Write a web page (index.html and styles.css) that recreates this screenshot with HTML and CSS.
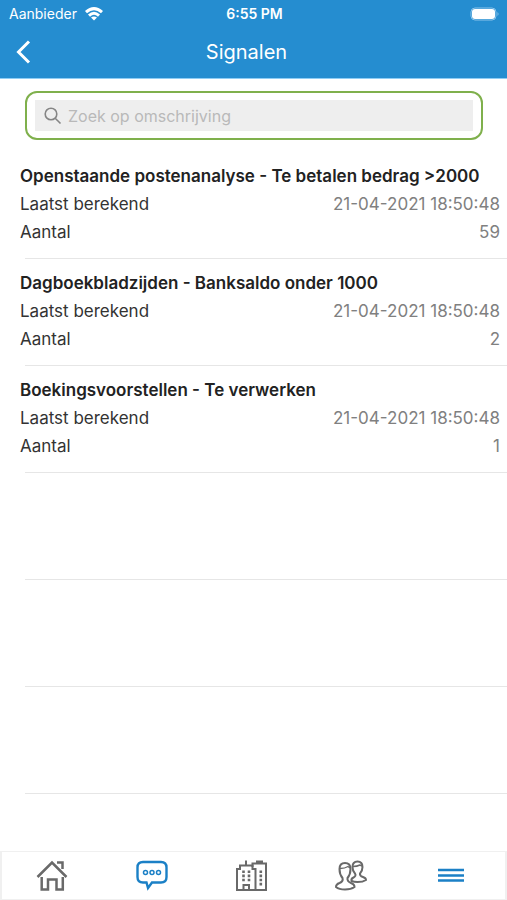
FILE: index.html
```html
<!DOCTYPE html>
<html lang="nl">
<head>
  <meta charset="UTF-8" />
  <meta name="viewport" content="width=device-width, initial-scale=1.0"/>
  <title>Signalen</title>
  <link rel="stylesheet" href="styles.css">
</head>
<body>
  <header>
    <div class="status">
      <span class="carrier">Aanbieder
        <svg width="20" height="16" viewBox="0 0 20 16" fill="none" stroke="#fff" stroke-width="3">
          <path d="M2 6.2Q10-1 18 6.2"/>
          <path d="M5 9.6Q10 5 15 9.6"/>
          <path d="M10 14.6L7 11.6Q10 9.4 13 11.6Z" fill="#fff" stroke="none"/>
        </svg>
      </span>
      <span class="clock">6:55 PM</span>
      <svg class="battery" width="30" height="14" viewBox="0 0 30 14">
        <rect x="1" y="1" width="25" height="12" rx="4" fill="none" stroke="#8cc4ea"/>
        <rect x="2" y="2" width="23" height="10" rx="3" fill="#fff"/>
        <path d="M27.5 5v4q2-2 0-4z" fill="#8cc4ea"/>
      </svg>
    </div>
    <div class="titlebar">
      <button class="back" type="button" aria-label="Terug">
        <svg width="15" height="24" viewBox="0 0 15 24" fill="none" stroke="#fff" stroke-width="3">
          <path d="M13 1.5L2.5 12L13 22.5"/>
        </svg>
      </button>
      <h1>Signalen</h1>
    </div>
  </header>

  <main>
    <form class="search">
      <label class="search-field">
        <svg width="18" height="18" viewBox="0 0 18 18" fill="none" stroke="#858585" stroke-width="1.6">
          <circle cx="7" cy="7" r="5.8"/>
          <path d="M11.2 11.2L16.5 16.5"/>
        </svg>
        <input type="text" placeholder="Zoek op omschrijving" aria-label="Zoek op omschrijving">
      </label>
    </form>

    <ul class="signals">
      <li>
        <h2>Openstaande postenanalyse - Te betalen bedrag &gt;2000</h2>
        <p><span>Laatst berekend</span><span class="value">21-04-2021 18:50:48</span></p>
        <p><span>Aantal</span><span class="value">59</span></p>
      </li>
      <li>
        <h2>Dagboekbladzijden - Banksaldo onder 1000</h2>
        <p><span>Laatst berekend</span><span class="value">21-04-2021 18:50:48</span></p>
        <p><span>Aantal</span><span class="value">2</span></p>
      </li>
      <li>
        <h2>Boekingsvoorstellen - Te verwerken</h2>
        <p><span>Laatst berekend</span><span class="value">21-04-2021 18:50:48</span></p>
        <p><span>Aantal</span><span class="value">1</span></p>
      </li>
      <li></li>
      <li></li>
      <li></li>
    </ul>
  </main>

  <nav>
    <a href="#home" aria-label="Home">
      <svg width="32" height="32" viewBox="0 0 32 32" fill="none" stroke="currentColor" stroke-width="2.5">
        <path d="M1.5 17L16 2.5L30.5 17"/>
        <path d="M21 2.5H26.500V9"/>
        <path d="M5.7 17V29.500H12V19.500H20.5V29.500H26.8V17"/>
      </svg>
    </a>
    <a href="#signalen" class="active" aria-label="Signalen">
      <svg width="32" height="32" viewBox="0 0 32 32" fill="none" stroke="currentColor" stroke-width="2.4">
        <path d="M7 2H25Q30.5 2 30.5 7.5V17Q30.5 22.5 25 22.5H16L12 28L10.5 22.5H7Q1.5 22.5 1.5 17V7.5Q1.5 2 7 2Z"/>
        <g stroke-width="1.5">
          <circle cx="9.5" cy="12.5" r="2"/>
          <circle cx="16" cy="12.5" r="2"/>
          <circle cx="22.5" cy="12.5" r="2"/>
        </g>
      </svg>
    </a>
    <a href="#bedrijven" aria-label="Bedrijven">
      <svg width="32" height="32" viewBox="0 0 32 32" fill="none" stroke="currentColor" stroke-width="2">
        <path d="M2 30V9H5V5.5H17.5V9H20.5V30Z"/>
        <path d="M11 5V0.5"/>
        <path d="M17.5 7V3.5H31V30H20"/>
        <path d="M21 2H28" stroke-width="3"/>
        <path d="M8.5 30V25H14V30"/>
        <path d="M8.5 10.5V21.5M14 10.5V21.5M25.8 10.5V25.500" stroke-width="2.6" stroke-dasharray="2.6 1.5"/>
      </svg>
    </a>
    <a href="#relaties" aria-label="Relaties">
      <svg width="32" height="32" viewBox="0 0 32 32" fill="none" stroke="currentColor" stroke-width="2">
        <path d="M7.5 18Q4.500 14.500 4.500 9Q4.500 3 10 3Q15.500 3 15.500 9Q15.500 14.500 12.500 18Q12 21.500 16 23Q19.500 24.200 19.500 27Q16 29.500 10 29.500Q4 29.500 1 27Q1 24.200 4.500 23Q8.500 21.500 7.500 18Z"/>
        <path d="M5 8.500Q10 8.500 13 6.500L15 8" stroke-width="1.400"/>
        <path d="M17.500 7Q17.500 1.500 22.500 1.500Q27.500 1.500 27.500 7Q27.500 11 25 13.500Q24.500 16 28 17Q31 18 31 20Q28 22 22.500 22Q19 22 16.500 21Q16 18.500 18.500 17.500Q21.500 16 20 13.500Q17.500 11 17.500 7Z"/>
        <path d="M18 6.500Q22 6.500 25 5L27 6" stroke-width="1.400"/>
      </svg>
    </a>
    <a href="#menu" class="active" aria-label="Menu">
      <svg width="32" height="32" viewBox="0 0 32 32" fill="none" stroke="currentColor" stroke-width="2.5">
        <path d="M3 10H29M3 15.5H29M3 20.5H29"/>
      </svg>
    </a>
  </nav>
</body>
</html>
```

FILE: styles.css
```css
* {
  box-sizing: border-box;
}
body {
  margin: 0;
  min-height: 100vh;
  display: flex;
  flex-direction: column;
  font-family: Inter, "Liberation Sans", sans-serif;
  font-size: 17px;
  color: #333;
  background: #fff;
}
header {
  background: #258dd0;
  color: #fff;
  border-bottom: 1px solid #8fcdf5;
}
.status {
  display: grid;
  grid-template-columns: 1fr auto 1fr;
  align-items: center;
  height: 27px;
  padding: 0 7px 0 9px;
  font-size: 14px;
}
.carrier {
  display: flex;
  align-items: center;
  gap: 7px;
}
.clock {
  font-weight: 600;
}
.battery {
  justify-self: end;
}
.titlebar {
  display: grid;
  grid-template-columns: 46px 1fr 60px;
  align-items: center;
  height: 51px;
  padding-bottom: 2px;
}
.back {
  display: flex;
  padding: 0 0 0 16px;
  border: none;
  background: none;
  cursor: pointer;
}
h1 {
  margin: 0;
  font-size: 20px;
  font-weight: 400;
  text-align: center;
}
main {
  flex: 1;
}
.search {
  margin: 12px 24px 12px 25px;
  padding: 7px 8px;
  border: 2px solid #7fb04c;
  border-radius: 12px;
}
.search-field {
  display: flex;
  align-items: center;
  gap: 6px;
  height: 31px;
  padding-left: 9px;
  background: #eee;
}
.search-field input {
  flex: 1;
  min-width: 0;
  padding: 0;
  border: none;
  outline: none;
  background: none;
  font: inherit;
  font-size: 16px;
}
.search-field input::placeholder {
  color: #b9b9b9;
}
.signals {
  list-style: none;
  margin: 0;
  padding: 0;
}
.signals li {
  display: flex;
  flex-direction: column;
  min-height: 107px;
  padding-top: 10px;
}
.signals li::after {
  content: "";
  height: 1px;
  margin: auto 0 0 25px;
  background: #e6e6e6;
}
.signals h2,
.signals p {
  margin: 0 7px 0 20px;
  font-size: 17px;
  line-height: 28px;
}
.signals h2 {
  font-weight: 600;
  color: #222;
}
.signals p {
  display: flex;
  justify-content: space-between;
}
.value {
  color: #808080;
}
nav {
  display: grid;
  grid-template-columns: repeat(5, 1fr);
  height: 49px;
  padding-right: 4px;
  border: 1px solid #f0f0f0;
  border-width: 1px 2px;
}
nav a {
  display: flex;
  align-items: center;
  justify-content: center;
  color: #696969;
}
nav a.active {
  color: #1b80c6;
}
```
